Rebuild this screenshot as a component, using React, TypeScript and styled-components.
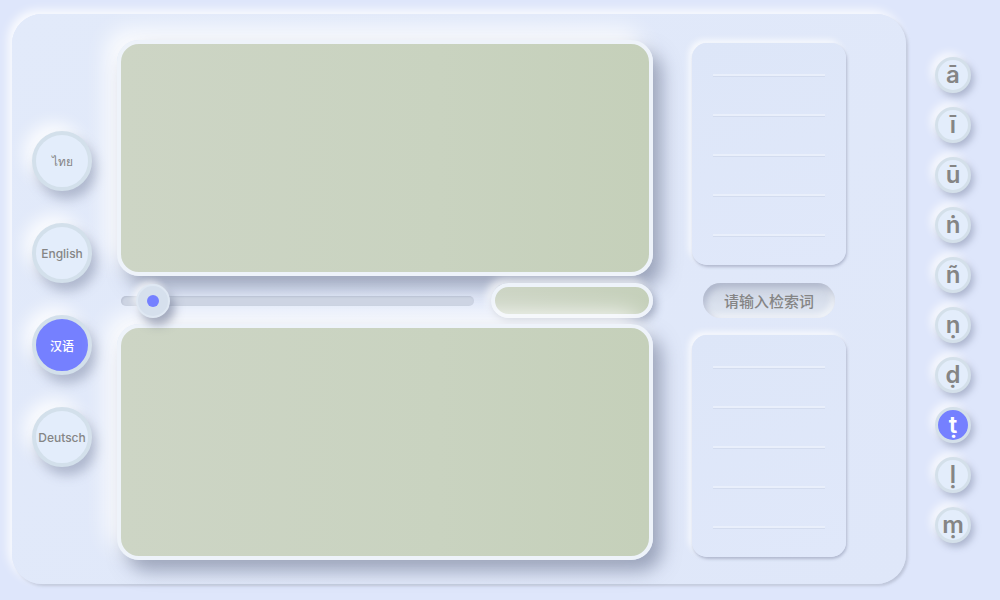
import React from "react";
import styled, { createGlobalStyle, css } from "styled-components";

const Global = createGlobalStyle`
  html, body { margin: 0; padding: 0; background: #dee6fb; }
  body { font-family: "Inter", "Noto Sans", "Noto Sans CJK SC", sans-serif; width: 1000px; height: 600px; overflow: hidden; }
`;

const Page = styled.div`
  display: flex;
  align-items: flex-start;
  padding: 14px 0 0 12px;
  width: 1000px;
  height: 600px;
  box-sizing: border-box;
`;

const Shell = styled.div`
  width: 894px;
  height: 570px;
  box-sizing: border-box;
  border-radius: 30px;
  background: linear-gradient(135deg, #e2eafa 0%, #dfe7f9 100%);
  box-shadow: -4px -4px 10px rgba(255, 255, 255, 0.85), 2px 2px 3px rgba(160, 168, 190, 0.6);
  display: flex;
  padding: 26px 60px 24px 20px;
`;

const LangCol = styled.div`
  width: 60px;
  display: flex;
  flex-direction: column;
  justify-content: center;
  gap: 32px;
  margin-top: -26px;
  margin-bottom: -24px;
`;

const circleBase = css<{ $active?: boolean }>`
  border-radius: 50%;
  box-sizing: border-box;
  display: flex;
  align-items: center;
  justify-content: center;
  background: ${(p) => (p.$active ? "#7580ff" : "#e3edfb")};
  color: ${(p) => (p.$active ? "#ffffff" : "#858585")};
`;

const LangButton = styled.div<{ $active?: boolean }>`
  ${circleBase};
  width: 60px;
  height: 60px;
  border: 4px solid #d3e0eb;
  font-size: 12px;
  font-weight: 500;
  box-shadow: 5px 8px 12px rgba(100, 110, 140, 0.4), -8px -8px 16px rgba(255, 255, 255, 0.85);
`;

const Center = styled.div`
  width: 536px;
  margin-left: 25px;
  display: flex;
  flex-direction: column;
`;

const Screen = styled.div`
  height: 236px;
  box-sizing: border-box;
  border: 4px solid #eef3fa;
  border-radius: 22px;
  background: linear-gradient(90deg, #cdd5c5 0%, #c9d3c0 60%, #c5d0ba 100%);
  box-shadow: 9px 11px 18px rgba(85, 95, 125, 0.5), -10px -10px 22px rgba(255, 255, 255, 0.95);
`;

const ControlRow = styled.div`
  height: 35px;
  margin: 7px 0 6px;
  display: flex;
  align-items: center;
`;

const Track = styled.div`
  position: relative;
  width: 353px;
  height: 10px;
  margin-left: 4px;
  border-radius: 5px;
  background: #cdd4e3;
  box-shadow: inset 1px 1px 2px rgba(160, 168, 190, 0.45);
`;

const Thumb = styled.div`
  position: absolute;
  left: 15px;
  top: -12px;
  width: 34px;
  height: 34px;
  border-radius: 50%;
  box-sizing: border-box;
  background: #d6e0ed;
  border: 2px solid #dfe8f3;
  display: flex;
  align-items: center;
  justify-content: center;
  box-shadow: 5px 7px 10px rgba(90, 100, 130, 0.5), -3px -3px 6px rgba(255, 255, 255, 0.7);
`;

const Dot = styled.div`
  width: 12px;
  height: 12px;
  border-radius: 50%;
  background: #7580ff;
`;

const SmallScreen = styled.div`
  margin-left: auto;
  width: 162px;
  height: 35px;
  box-sizing: border-box;
  border: 4px solid #eef3fa;
  border-radius: 18px;
  background: linear-gradient(90deg, #cdd5c5 0%, #c5d0ba 100%);
  box-shadow: 3px 4px 8px rgba(85, 95, 125, 0.45), -4px -4px 8px rgba(255, 255, 255, 0.8);
`;

const Side = styled.div`
  width: 154px;
  margin-left: 39px;
  margin-top: 3px;
  display: flex;
  flex-direction: column;
  align-items: center;
`;

const Card = styled.div`
  width: 154px;
  height: 222px;
  box-sizing: border-box;
  border-radius: 15px;
  background: linear-gradient(160deg, #dde6f8 0%, #e0e8fa 100%);
  box-shadow: 1px 2px 3px rgba(150, 158, 185, 0.65), -3px -3px 6px rgba(255, 255, 255, 0.8);
  padding: 31px 21px 0;
  display: flex;
  flex-direction: column;
  gap: 38px;
`;

const Line = styled.div`
  height: 2px;
  background: #e9effb;
  box-shadow: 0 1px 0 #d3dcef;
`;

const Search = styled.div`
  width: 132px;
  height: 35px;
  margin: 18px 0 17px;
  border-radius: 18px;
  box-sizing: border-box;
  background: linear-gradient(180deg, #cbd2e0 0%, #d9e0ed 60%, #e1e7f3 100%);
  box-shadow: inset 3px 4px 6px rgba(150, 158, 185, 0.55), inset -3px -3px 6px rgba(255, 255, 255, 0.6);
  display: flex;
  align-items: center;
  justify-content: center;
  font-family: "Noto Sans CJK SC", sans-serif;
  font-size: 15px;
  font-weight: 500;
  color: #858585;
`;

const PaliCol = styled.div`
  margin-left: 29px;
  margin-top: 43px;
  display: flex;
  flex-direction: column;
  gap: 14px;
`;

const PaliKey = styled.div<{ $active?: boolean }>`
  ${circleBase};
  width: 36px;
  height: 36px;
  border: 3px solid #d4e0ea;
  font-family: "Inter", "Noto Sans", "DejaVu Sans", sans-serif;
  font-size: 24px;
  font-weight: 600;
  line-height: 1;
  box-shadow: 3px 4px 7px rgba(100, 110, 140, 0.4), -4px -4px 8px rgba(255, 255, 255, 0.8);
`;

const langs = [
  { label: "ไทย", active: false },
  { label: "English", active: false },
  { label: "汉语", active: true },
  { label: "Deutsch", active: false },
];

const pali = ["ā", "ī", "ū", "ṅ", "ñ", "ṇ", "ḍ", "ṭ", "ḷ", "ṃ"];

const Lines = () => (
  <>
    {[0, 1, 2, 3, 4].map((i) => (
      <Line key={i} />
    ))}
  </>
);

export default function App() {
  return (
    <>
      <Global />
      <Page>
        <Shell>
          <LangCol>
            {langs.map((l) => (
              <LangButton key={l.label} $active={l.active}>
                {l.label}
              </LangButton>
            ))}
          </LangCol>
          <Center>
            <Screen />
            <ControlRow>
              <Track>
                <Thumb>
                  <Dot />
                </Thumb>
              </Track>
              <SmallScreen />
            </ControlRow>
            <Screen />
          </Center>
          <Side>
            <Card>
              <Lines />
            </Card>
            <Search>请输入检索词</Search>
            <Card>
              <Lines />
            </Card>
          </Side>
        </Shell>
        <PaliCol>
          {pali.map((c) => (
            <PaliKey key={c} $active={c === "ṭ"}>
              {c}
            </PaliKey>
          ))}
        </PaliCol>
      </Page>
    </>
  );
}
